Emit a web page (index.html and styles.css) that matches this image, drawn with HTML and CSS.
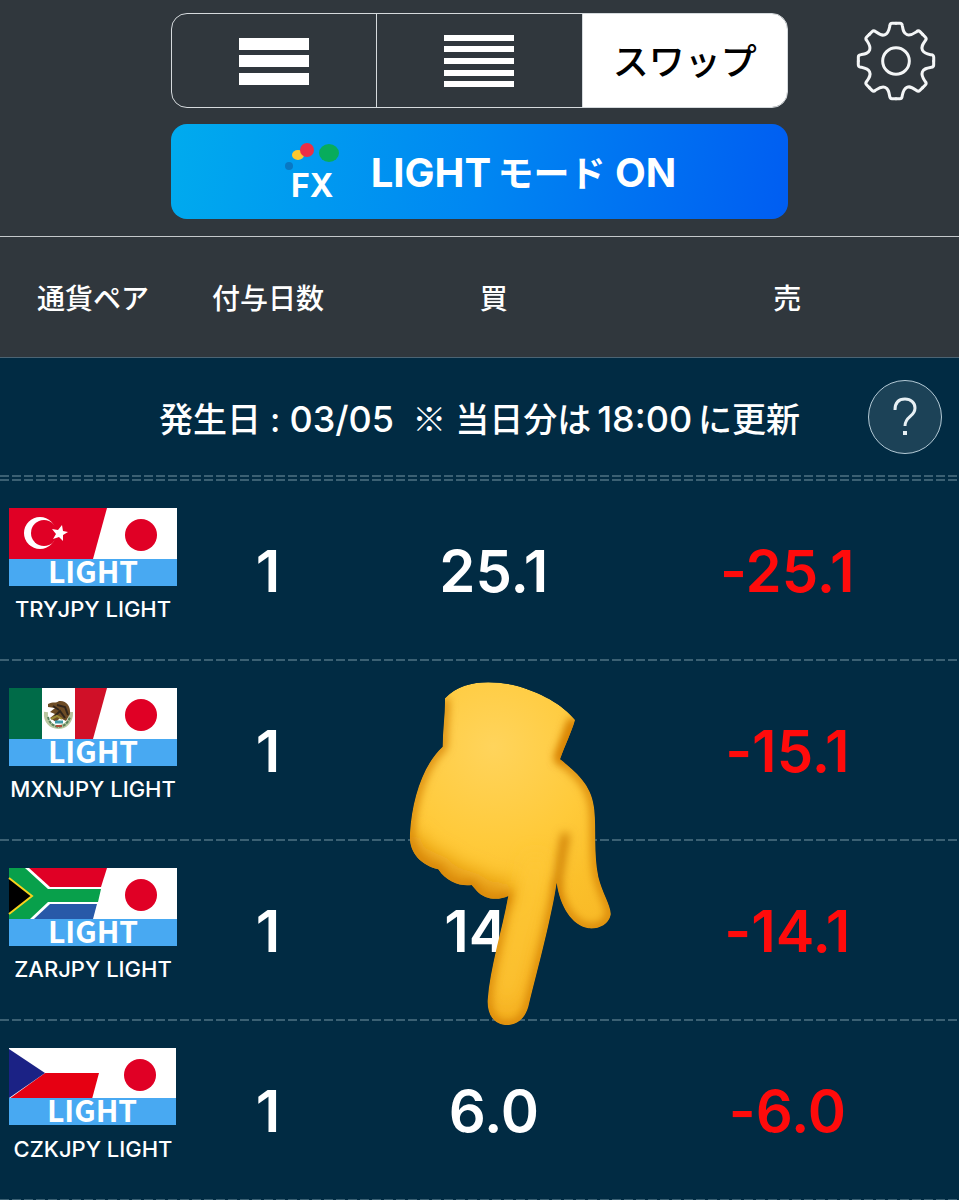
FILE: index.html
```html
<!DOCTYPE html>
<html lang="ja">
<head>
  <meta charset="UTF-8">
  <meta name="viewport" content="width=device-width, initial-scale=1.0">
  <title>スワップ</title>
  <link rel="stylesheet" href="styles.css">
</head>
<body>
  <header class="toolbar">
    <div class="toolbar-main">
      <div class="segments">
        <button class="segment" aria-label="標準表示">
          <svg width="70" height="52" viewBox="0 0 70 52" fill="#fff">
            <rect y="3" width="70" height="12"/>
            <rect y="20" width="70" height="12"/>
            <rect y="38" width="70" height="12"/>
          </svg>
        </button>
        <button class="segment" aria-label="一覧表示">
          <svg width="70" height="52" viewBox="0 0 70 52" fill="#fff">
            <rect width="70" height="6"/>
            <rect y="11" width="70" height="6"/>
            <rect y="23" width="70" height="6"/>
            <rect y="35" width="70" height="6"/>
            <rect y="46" width="70" height="6"/>
          </svg>
        </button>
        <button class="segment active">スワップ</button>
      </div>
      <button class="mode-button">
        <svg class="fx-logo" width="56" height="58" viewBox="0 0 56 58">
          <circle cx="6" cy="24" r="4" fill="#0878c4"/>
          <ellipse cx="15" cy="13" rx="6" ry="5" fill="#fdc82f"/>
          <circle cx="24" cy="8" r="7" fill="#ec2f45"/>
          <ellipse cx="46" cy="11" rx="10" ry="9" fill="#08ac5c"/>
          <text x="8" y="55" class="fx-text">FX</text>
        </svg>
        <span>LIGHT&thinsp;<span class="kana">モード</span> ON</span>
      </button>
    </div>
    <button class="settings" aria-label="設定">
      <svg width="80" height="80" viewBox="-120 -120 240 240" fill="none" stroke="#f4f6f7" stroke-width="9" stroke-linecap="round">
        <defs>
          <path id="tooth" d="M0 -113H12Q18 -113 19 -106C21 -94 22 -83 33 -79C44 -75 53 -82 62 -88Q67 -93 72 -88L80 -80"/>
        </defs>
        <use href="#tooth"/>
        <use href="#tooth" transform="rotate(45)"/>
        <use href="#tooth" transform="rotate(90)"/>
        <use href="#tooth" transform="rotate(135)"/>
        <use href="#tooth" transform="rotate(180)"/>
        <use href="#tooth" transform="rotate(225)"/>
        <use href="#tooth" transform="rotate(270)"/>
        <use href="#tooth" transform="rotate(315)"/>
        <circle r="40"/>
      </svg>
    </button>
  </header>

  <table class="swap-table">
    <colgroup>
      <col class="col-pair">
      <col class="col-days">
      <col class="col-buy">
      <col class="col-sell">
    </colgroup>
    <thead>
      <tr class="headings">
        <th>通貨ペア</th>
        <th>付与日数</th>
        <th>買</th>
        <th class="sell-cell">売</th>
      </tr>
      <tr>
        <th class="notice" colspan="4">
          <div class="notice-row">
            <span class="notice-text">発生日 : <span class="digits">03/05</span>&nbsp; <span class="mark">※</span> 当日分は&thinsp;<span class="digits">18:00</span>&thinsp;に更新</span>
            <button class="help" aria-label="ヘルプ">
              <svg width="24" height="40" viewBox="0 0 24 40" fill="none" stroke="#e8f0f4" stroke-width="3">
                <path d="M2 13C2 5 6 2 12 2C18 2 22 6 22 11C22 20 12 19 12 29"/>
                <path d="M12 34V38" stroke-width="4"/>
              </svg>
            </button>
          </div>
        </th>
      </tr>
    </thead>
    <tbody>
      <tr>
        <td class="pair">
          <svg class="flag" width="168" height="78" viewBox="0 0 168 78">
            <rect width="168" height="51" fill="#fff"/>
            <path d="M0 0H98L84 51H0Z" fill="#e00025"/>
            <circle cx="31" cy="25" r="16" fill="#fff"/>
            <circle cx="35" cy="25" r="13" fill="#e00025"/>
            <path d="M53 17L54 23L59 24L54 27L54 33L50 29L44 31L47 26L43 21L49 22Z" fill="#fff"/>
            <circle cx="132" cy="27" r="16" fill="#e00025"/>
            <rect y="51" width="168" height="27" fill="#48a9f2"/>
            <text x="84" y="75" class="flag-text">LIGHT</text>
          </svg>
          <div class="pair-name">TRYJPY LIGHT</div>
        </td>
        <td>1</td>
        <td>25.1</td>
        <td class="sell-cell minus">-25.1</td>
      </tr>
      <tr>
        <td class="pair">
          <svg class="flag" width="168" height="78" viewBox="0 0 168 78">
            <rect width="168" height="51" fill="#fff"/>
            <rect width="33" height="51" fill="#006b48"/>
            <path d="M66 0H98L84 51H66Z" fill="#d01028"/>
            <path d="M37 24C35 44 63 44 62 24" fill="none" stroke="#b9c6a0" stroke-width="4"/>
            <path d="M39 29C42 42 57 42 61 29" fill="none" stroke="#58805a" stroke-width="2" stroke-dasharray="3 1"/>
            <path d="M39 16C44 13 47 16 50 13C57 12 62 18 61 26L57 33L51 30L47 34L41 30L46 26L41 24L46 20L39 19Z" fill="#6d4c25"/>
            <path d="M48 17L56 19L59 27M46 28L51 23L56 30M44 18L50 22" fill="none" stroke="#30251b" stroke-width="2"/>
            <path d="M42 31L48 28L53 31" fill="none" stroke="#9b8b36" stroke-width="2"/>
            <path d="M46 34H54" stroke="#3f9aa8" stroke-width="3"/>
            <path d="M47 38H53" stroke="#b04b38" stroke-width="2"/>
            <circle cx="132" cy="27" r="16" fill="#e00025"/>
            <rect y="51" width="168" height="27" fill="#48a9f2"/>
            <text x="84" y="75" class="flag-text">LIGHT</text>
          </svg>
          <div class="pair-name">MXNJPY LIGHT</div>
        </td>
        <td>1</td>
        <td class="pointed">
          15.1
          <svg class="hand" width="240" height="370" viewBox="0 0 720 1110" aria-hidden="true">
            <defs>
              <path id="hand-shape" d="M165 85C215 30 300 30 370 45C450 65 520 105 555 150C545 185 525 225 510 268C565 310 607 350 613 420C619 480 611 550 625 620C637 670 665 710 662 735C655 765 625 778 595 775C545 765 510 710 500 638C485 740 445 890 415 1010C404 1048 378 1068 345 1065C308 1060 291 1030 293 990C300 895 336 780 355 678C325 692 285 690 260 662L245 645C215 650 170 638 145 598C90 585 55 545 60 490C66 390 98 285 158 230C158 180 166 130 165 85Z"/>
              <clipPath id="hand-clip"><use href="#hand-shape"/></clipPath>
              <radialGradient id="hand-fill" gradientUnits="userSpaceOnUse" cx="310" cy="230" r="850">
                <stop offset="0" stop-color="#ffd45c"/>
                <stop offset="0.35" stop-color="#ffca3a"/>
                <stop offset="0.55" stop-color="#fbc02b"/>
                <stop offset="1" stop-color="#f5b020"/>
              </radialGradient>
              <filter id="soft" filterUnits="userSpaceOnUse" x="0" y="0" width="720" height="1110"><feGaussianBlur stdDeviation="14"/></filter>
              <filter id="softer" filterUnits="userSpaceOnUse" x="0" y="0" width="720" height="1110"><feGaussianBlur stdDeviation="28"/></filter>
            </defs>
            <g clip-path="url(#hand-clip)">
              <use href="#hand-shape" fill="url(#hand-fill)"/>
              <path d="M60 500C70 570 120 570 155 590C200 640 230 620 270 650C300 680 340 670 360 650" fill="none" stroke="#e19409" stroke-width="60" filter="url(#softer)"/>
              <path d="M165 85C165 130 158 180 158 230C98 285 66 390 60 490C55 545 90 585 145 598C170 638 215 650 245 645C275 695 325 692 355 678C336 780 300 895 293 990C291 1030 308 1065 345 1065C378 1068 404 1048 415 1010C445 890 485 740 500 638C510 710 545 765 595 775C640 778 655 755 662 735C665 710 637 670 625 620C611 550 619 480 613 420C607 350 565 310 510 268C525 225 545 185 555 150" fill="none" stroke="#d17c00" stroke-width="22" filter="url(#soft)"/>
              <path d="M555 150L510 275" fill="none" stroke="#d98200" stroke-width="36" filter="url(#soft)"/>
              <path d="M527 490C516 550 508 600 500 650" fill="none" stroke="#c97700" stroke-width="22" filter="url(#soft)"/>
              <path d="M440 560C420 710 370 850 345 990" fill="none" stroke="#ffca3b" stroke-width="36" filter="url(#softer)"/>
            </g>
          </svg>
        </td>
        <td class="sell-cell minus">-15.1</td>
      </tr>
      <tr>
        <td class="pair">
          <svg class="flag" width="168" height="78" viewBox="0 0 168 78">
            <rect width="168" height="51" fill="#fff"/>
            <path d="M20 0H98L92 19H41Z" fill="#e00025"/>
            <path d="M41 36H88L84 51H25Z" fill="#2859a8"/>
            <path d="M0 0H16L39 21H92L89 34H39L21 51H0Z" fill="#08a04b"/>
            <path d="M0 10L23 28L0 46Z" fill="#000"/>
            <path d="M0 10L23 28L0 46" fill="none" stroke="#f8d21c" stroke-width="2"/>
            <circle cx="132" cy="27" r="16" fill="#e00025"/>
            <rect y="51" width="168" height="27" fill="#48a9f2"/>
            <text x="84" y="75" class="flag-text">LIGHT</text>
          </svg>
          <div class="pair-name">ZARJPY LIGHT</div>
        </td>
        <td>1</td>
        <td>14.1</td>
        <td class="sell-cell minus">-14.1</td>
      </tr>
      <tr>
        <td class="pair">
          <svg class="flag" width="168" height="78" viewBox="0 0 168 78">
            <rect width="167" height="51" fill="#fff"/>
            <path d="M0 51L36 25H90L83 51Z" fill="#e60012"/>
            <path d="M0 1L36 25L0 50Z" fill="#1b2285"/>
            <circle cx="131" cy="27" r="16" fill="#e00025"/>
            <rect y="50" width="167" height="27" fill="#48a9f2"/>
            <text x="83" y="74" class="flag-text">LIGHT</text>
          </svg>
          <div class="pair-name">CZKJPY LIGHT</div>
        </td>
        <td>1</td>
        <td>6.0</td>
        <td class="sell-cell minus">-6.0</td>
      </tr>
    </tbody>
  </table>
</body>
</html>
```

FILE: styles.css
```css
* {
  box-sizing: border-box;
}
body {
  margin: 0;
  background-color: #012b43;
  color: #fff;
  font-family: Inter, "Noto Sans CJK JP", sans-serif;
}
button {
  margin: 0;
  padding: 0;
  border: none;
  background: none;
  color: inherit;
  font-family: inherit;
  cursor: pointer;
}
svg {
  display: block;
  overflow: visible;
}

/* Toolbar */
.toolbar {
  display: grid;
  grid-template-columns: 1fr minmax(0, 617px) 1fr;
  padding: 13px 0 17px;
  background-color: #30373d;
  border-bottom: 1px solid #c4c8cb;
}
.toolbar-main {
  grid-column: 2;
  display: flex;
  flex-direction: column;
  gap: 16px;
}
.segments {
  display: flex;
  height: 95px;
  border: 1px solid #d5dadd;
  border-radius: 16px;
  overflow: hidden;
}
.segment {
  flex: 1;
  display: flex;
  align-items: center;
  justify-content: center;
}
.segment + .segment {
  border-left: 1px solid #d5dadd;
}
.segment.active {
  padding-bottom: 4px;
  background-color: #fff;
  color: #000;
  font-size: 36px;
  font-weight: 500;
}
.mode-button {
  display: flex;
  align-items: center;
  justify-content: center;
  gap: 32px;
  height: 95px;
  padding-bottom: 2px;
  border-radius: 16px;
  background: linear-gradient(100deg, #00abee, #0087f2 50%, #005df2);
  font-size: 40px;
  font-weight: 700;
}
.kana {
  font-size: 36px;
}
.fx-text {
  fill: #fff;
  font-size: 32px;
  font-weight: 700;
}
.settings {
  justify-self: end;
  align-self: start;
  margin: 8px 23px 0 0;
}

/* Swap table */
.swap-table {
  width: 100%;
  table-layout: fixed;
  border-collapse: collapse;
}
.col-pair {
  width: 19.4%;
}
.col-days {
  width: 17.1%;
}
.col-buy {
  width: 30%;
}
th, td {
  padding: 0;
  text-align: center;
}
.headings th {
  height: 120px;
  background-color: #30373d;
  border-bottom: 1px solid #4b6474;
  font-size: 28px;
  font-weight: 500;
}
.swap-table .sell-cell {
  padding-right: 22px;
}
.notice {
  height: 124px;
  padding-bottom: 4px;
  background:
    repeating-linear-gradient(90deg, #3b6073 0 9px, transparent 9px 12px) 0 100% / 100% 2px no-repeat,
    repeating-linear-gradient(90deg, #3b6073 0 9px, transparent 9px 12px) 0 calc(100% - 4px) / 100% 2px no-repeat;
}
.notice-row {
  display: grid;
  grid-template-columns: 1fr auto 1fr;
  align-items: center;
}
.notice-text {
  grid-column: 2;
  font-size: 34px;
  font-weight: 500;
  white-space: nowrap;
}
.digits {
  font-size: 36px;
}
.mark {
  font-family: "Noto Sans CJK JP", sans-serif;
  font-weight: 400;
}
.help {
  justify-self: end;
  display: flex;
  align-items: center;
  justify-content: center;
  width: 74px;
  height: 74px;
  margin-right: 17px;
  border: 1px solid #b4cad6;
  border-radius: 50%;
  background-color: #1c4257;
}
tbody tr {
  background: repeating-linear-gradient(90deg, #3b6073 0 9px, transparent 9px 12px) 0 100% / 100% 2px no-repeat;
}
tbody td {
  height: 180px;
  font-size: 58px;
  font-weight: 600;
}
tbody .pair {
  padding: 0 0 12px 9px;
}
.flag-text {
  fill: #fff;
  font-family: "Noto Sans CJK JP", sans-serif;
  font-size: 30px;
  font-weight: 700;
  text-anchor: middle;
}
.pair-name {
  width: 168px;
  margin-top: 10px;
  font-size: 22px;
  font-weight: 500;
  line-height: 26px;
  white-space: nowrap;
}
.minus {
  color: #ff0b0b;
  font-feature-settings: "calt" 0;
}

/* Pointing hand laid over the buy column */
.pointed {
  position: relative;
}
.hand {
  position: absolute;
  top: 9px;
  left: 40px;
  z-index: 1;
}
```
